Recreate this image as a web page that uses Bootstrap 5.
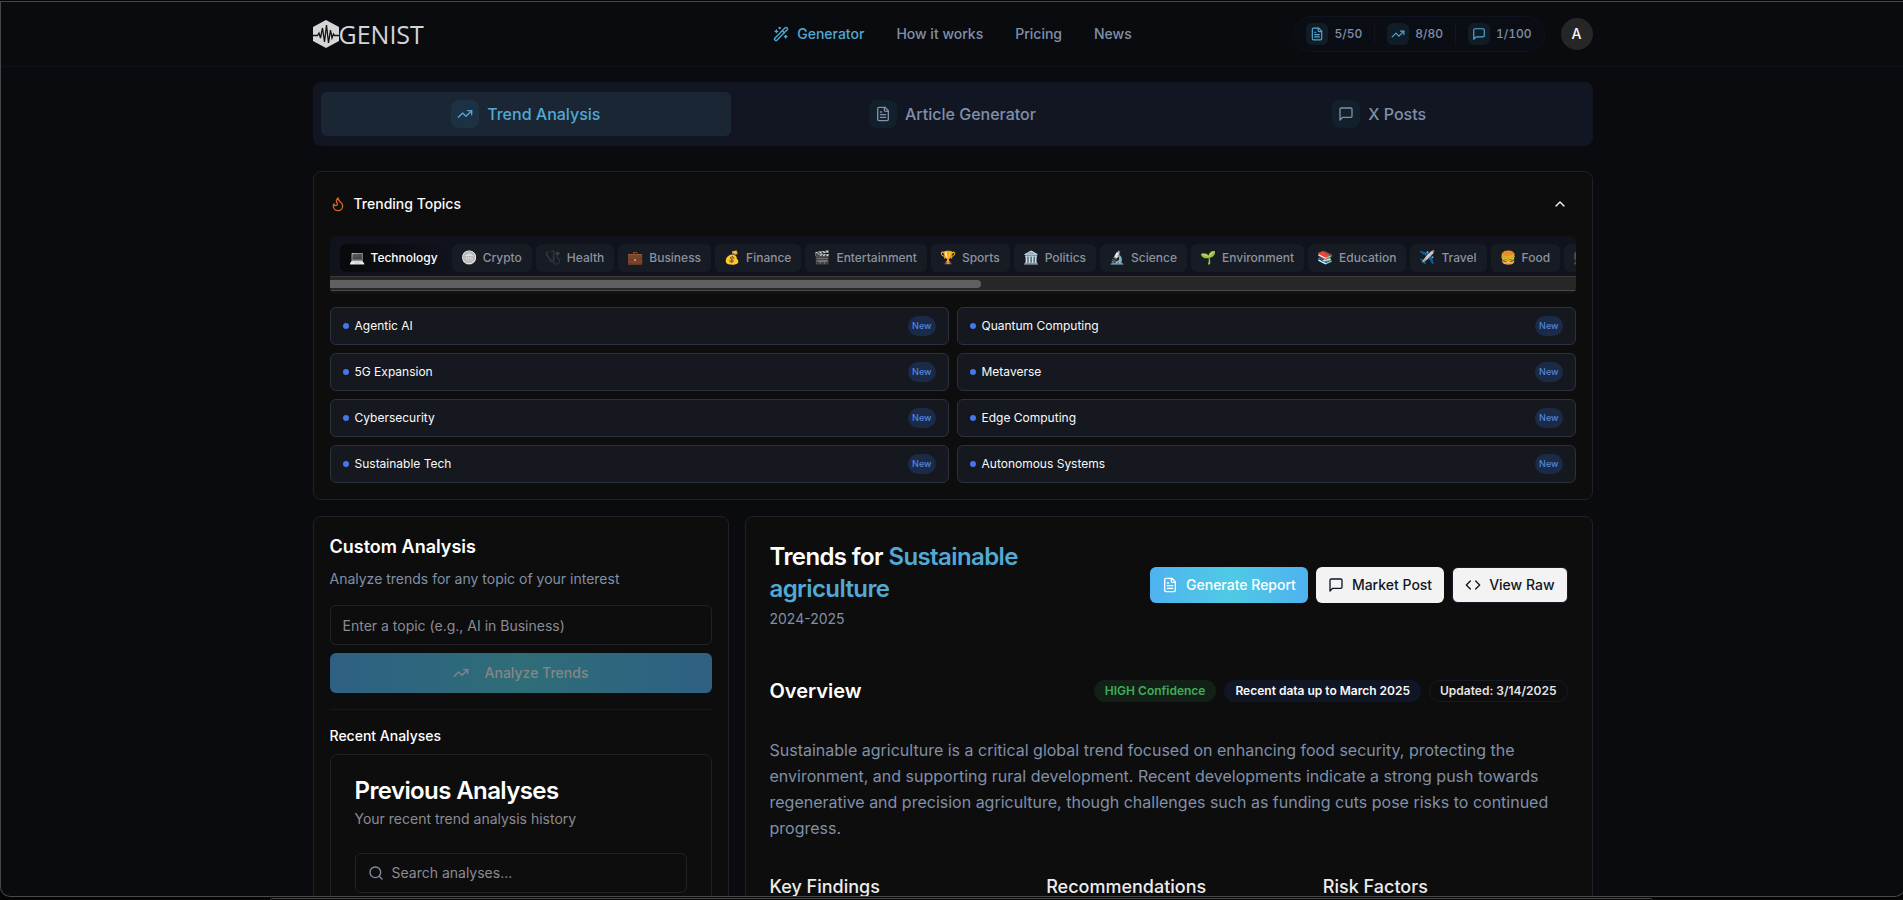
<!DOCTYPE html>
<html lang="en" data-bs-theme="dark">
<head>
<meta charset="utf-8">
<meta name="viewport" content="width=device-width, initial-scale=1">
<title>Genist – Trend Analysis</title>
<link href="https://cdn.jsdelivr.net/npm/bootstrap@5.3.0/dist/css/bootstrap.min.css" rel="stylesheet">
<style>
:root{--accent:#52a9d4;--muted:#8090a8;--gray:#8b8b93;--line:#212124;--panel:#0d0d0d}
body{font-family:Inter,"Noto Sans",sans-serif;font-size:14px;line-height:20px;background:#050505;color:#fafafa;height:100vh;overflow:hidden}
.ico{fill:none;stroke:currentColor;stroke-width:2;stroke-linecap:round;stroke-linejoin:round;flex:none}
.window{height:calc(100vh - 4px);margin-top:1px;margin-right:-2px;background:#0a0b0f;border:1px solid #45464a;border-bottom-color:#4a4a4c;border-radius:0 0 10px 10px;overflow:hidden}
.dock-edge{height:3px;margin:1px 250px 0 270px;border-top:1px solid #4c4a4a;border-radius:8px 8px 0 0}
.wrap{max-width:1280px;margin-inline:auto}
.site-head{height:65px;border-bottom:1px solid #0e101b}
.side{flex:1 1 0}
.top-nav{gap:32px}
.nav-link-top{color:var(--muted);font-weight:500;text-decoration:none}
.nav-link-top.active,.accent{color:var(--accent)}
.wordmark{font-family:"Open Sans",sans-serif;font-size:25px;line-height:28px;color:#d4d4d4}
.quota{height:36px;border:1px solid #10131f;border-radius:18px;background:#0b0d14;padding:0 12px;color:var(--muted);font-size:12px;font-weight:500;font-variant-numeric:tabular-nums}
.quota-item{gap:6px}
.quota-item + .quota-item{border-left:1px solid #12151f;padding-left:12px;margin-left:12px}
.tile{width:22px;height:22px;border-radius:6px;background:#111d26;color:var(--accent);display:flex;align-items:center;justify-content:center}
.tile-lg{width:28px;height:28px;border-radius:8px;background:#12202c;color:inherit}
.avatar{width:32px;height:32px;border:0;border-radius:50%;background:#262626;color:#fafafa;font-weight:500;padding:0}
.modes{margin-top:15px;padding:10px 8px;border-radius:8px;background:#111622;display:grid;grid-template-columns:repeat(3,1fr);gap:16px}
.mode{height:44px;border:0;border-radius:6px;background:none;color:var(--muted);font-size:16px;font-weight:500}
.mode.active{background:#1a2633;color:var(--accent)}
.mode.active .tile{background:#1c3144}
.panel{background:var(--panel);border:1px solid var(--line);border-radius:8px}
.trending{margin-top:25px;padding:16px}
.trend-title{height:32px;margin-bottom:16px;font-weight:500}
.flame{color:#d9622b}
.fold{border:0;background:none;color:#fafafa;padding:8px}
.chips{background:#10131c;border-radius:6px;overflow:hidden;padding-bottom:3px;margin-bottom:13px}
.chip-row{padding:8px 10px 4px;gap:4px;overflow:hidden}
.chip{height:28px;border:0;border-radius:6px;background:#171b24;color:#8d929d;font-size:12px;font-weight:500;padding:0 10px;gap:6px;white-space:nowrap;flex:none}
.chip.active{background:linear-gradient(90deg,#08090b,#10131c);color:#fff}
.emoji{font-size:13px;line-height:16px;width:15px;display:inline-flex;justify-content:center;font-family:"Noto Color Emoji",sans-serif}
.emoji-silver{filter:grayscale(1)}
.emoji-dim{filter:grayscale(.8) brightness(.4)}
.track{height:15px;background:#272727;border-top:1px solid #3a3a3a;border-bottom:1px solid #4a4a4a;padding:3px 0}
.thumb{height:8px;border-radius:0 4px 4px 0;background:#606060}
.topics{display:grid;grid-template-columns:1fr 1fr;gap:8px}
.topic{height:38px;border:1px solid #2b313d;border-radius:6px;background:#15181f;padding:0 12px;gap:6px;color:#fafafa;font-size:12px}
.dot{width:6px;height:6px;border-radius:50%;background:#4278ee}
.tag-new{height:20px;border-radius:10px;padding:0 4px;background:#1b2a47;color:#5487dc;font-size:9px;line-height:20px;font-weight:500}
.main-grid{display:grid;grid-template-columns:416px minmax(0,1fr);gap:16px;margin-top:16px}
.custom{padding:16px}
h1,h2,h3,h4,p{margin:0}
.h-panel{font-size:18px;line-height:28px;font-weight:600}
.h-section{font-size:20px;line-height:28px;font-weight:600}
.h-minor{font-size:14px;line-height:20px;font-weight:500}
.h-big{font-size:24px;line-height:32px;font-weight:600;letter-spacing:-.025em}
.history .h-big + p{margin-top:2px}
.report .h-big + p{margin-top:4px}
.txt-muted{color:var(--muted)}
.txt-gray{color:var(--gray)}
.rule{border-color:#16181f;opacity:1}
.field{height:40px;background:var(--panel);border:1px solid #232326;border-radius:6px;padding:0 12px;color:#fafafa;font-size:14px;width:100%}
.field::placeholder{color:var(--gray);opacity:1}
.analyze{height:40px;margin-top:8px;border:0;border-radius:6px;background:linear-gradient(90deg,#2e6083,#2f6d78,#2e6083);color:#868686;font-weight:500;width:100%}
.history{margin-top:8px;padding:20px 24px 24px}
.finder{gap:8px}
.finder input{background:none;border:0;outline:0;color:#fafafa;padding:0;width:100%}
.finder input::placeholder{color:var(--gray);opacity:1}
.report{padding:24px}
.report-title{max-width:300px}
.act{height:36px;border:0;border-radius:6px;padding:0 12px;gap:8px;font-weight:500;background:#f3f3f3;color:#111624;white-space:nowrap}
.act-main{background:linear-gradient(90deg,#4eb2f0,#4fcae4,#4eb2f0);color:#fff}
.act-raw{border:1px solid #151a2c}
.pill{height:22px;border:1px solid transparent;border-radius:11px;padding:0 10px;font-size:12px;line-height:20px;font-weight:600}
.pill-ok{background:#132017;color:#3fae57}
.pill-data{background:#111626;color:#fafafa}
.pill-date{border-color:#151a28;color:#e3e3e6}
.overview-text{font-size:16px;line-height:26px;margin-top:32px}
.cols3{display:grid;grid-template-columns:repeat(3,1fr);gap:32px;margin-top:32px}
.cols3 h3{font-size:18px;line-height:28px;font-weight:500;color:#ececec}
</style>
</head>
<body>
<svg class="d-none" xmlns="http://www.w3.org/2000/svg">
  <symbol id="i-trend" viewBox="0 0 24 24"><path d="M22 7 13.500 15.500 8.500 10.500 2 17"/><path d="M16 7h6v6"/></symbol>
  <symbol id="i-file" viewBox="0 0 24 24"><path d="M15 2H6a2 2 0 0 0-2 2v16a2 2 0 0 0 2 2h12a2 2 0 0 0 2-2V7Z"/><path d="M14 2v4a2 2 0 0 0 2 2h4"/><path d="M10 9H8"/><path d="M16 13H8"/><path d="M16 17H8"/></symbol>
  <symbol id="i-msg" viewBox="0 0 24 24"><path d="M21 15a2 2 0 0 1-2 2H7l-4 4V5a2 2 0 0 1 2-2h14a2 2 0 0 1 2 2z"/></symbol>
  <symbol id="i-wand" viewBox="0 0 24 24"><path d="m21.640 3.640-1.280-1.280a1.210 1.210 0 0 0-1.720 0L2.360 18.640a1.210 1.210 0 0 0 0 1.720l1.280 1.280a1.200 1.200 0 0 0 1.720 0L21.640 5.360a1.200 1.200 0 0 0 0-1.720"/><path d="m14 7 3 3"/><path d="M5 6v4"/><path d="M19 14v4"/><path d="M10 2v2"/><path d="M7 8H3"/><path d="M21 16h-4"/><path d="M11 3H9"/></symbol>
</svg>
<div class="window">
  <header class="site-head">
    <div class="wrap d-flex align-items-center h-100">
      <div class="side">
        <a href="#" class="d-inline-flex align-items-center text-decoration-none pt-1" aria-label="Genist home">
          <svg width="26" height="28" viewBox="0 0 26 28"><path d="M13 0 26 7v14l-13 7L0 21V7Z" fill="#d6d6d6"/><path d="M0 15.500h4.500l1.500-2.500 1.500 5 2-10 2 14L13.500 5l2 18 2-13 1.500 8 1.500-4 1 1.500H26" fill="none" stroke="#111" stroke-width="1.300"/></svg>
          <span class="wordmark">GENIST</span>
        </a>
      </div>
      <nav class="top-nav d-flex">
        <a href="#" class="nav-link-top active d-flex align-items-center gap-2"><svg class="ico" width="16" height="16"><use href="#i-wand"/></svg>Generator</a>
        <a href="#" class="nav-link-top">How it works</a>
        <a href="#" class="nav-link-top">Pricing</a>
        <a href="#" class="nav-link-top">News</a>
      </nav>
      <div class="side d-flex justify-content-end align-items-center gap-3">
        <div class="quota d-flex align-items-center">
          <div class="quota-item d-flex align-items-center"><span class="tile"><svg class="ico" width="14" height="14"><use href="#i-file"/></svg></span>5/50</div>
          <div class="quota-item d-flex align-items-center"><span class="tile"><svg class="ico" width="14" height="14"><use href="#i-trend"/></svg></span>8/80</div>
          <div class="quota-item d-flex align-items-center"><span class="tile"><svg class="ico" width="14" height="14"><use href="#i-msg"/></svg></span>1/100</div>
        </div>
        <button class="avatar" type="button">A</button>
      </div>
    </div>
  </header>
  <main class="wrap">
    <div class="modes">
      <button class="mode active d-flex align-items-center justify-content-center gap-2" type="button"><span class="tile tile-lg"><svg class="ico" width="16" height="16"><use href="#i-trend"/></svg></span>Trend Analysis</button>
      <button class="mode d-flex align-items-center justify-content-center gap-2" type="button"><span class="tile tile-lg"><svg class="ico" width="16" height="16"><use href="#i-file"/></svg></span>Article Generator</button>
      <button class="mode d-flex align-items-center justify-content-center gap-2" type="button"><span class="tile tile-lg"><svg class="ico" width="16" height="16"><use href="#i-msg"/></svg></span>X Posts</button>
    </div>

    <section class="panel trending">
      <div class="trend-title d-flex align-items-center gap-2">
        <svg class="ico flame" width="16" height="16" viewBox="0 0 24 24"><path d="M8.500 14.500A2.500 2.500 0 0 0 11 12c0-1.380-.5-2-1-3-1.072-2.143-.224-4.054 2-6 .5 2.500 2 4.900 4 6.500 2 1.600 3 3.500 3 5.500a7 7 0 1 1-14 0c0-1.153.433-2.294 1-3a2.500 2.500 0 0 0 2.500 2.500z"/></svg>
        Trending Topics
        <button type="button" class="fold ms-auto d-flex" aria-label="Collapse"><svg class="ico" width="16" height="16" viewBox="0 0 24 24"><path d="m18 15-6-6-6 6"/></svg></button>
      </div>
      <div class="chips">
        <div class="chip-row d-flex">
          <button type="button" class="chip active d-flex align-items-center"><span class="emoji emoji-silver">💻</span>Technology</button>
          <button type="button" class="chip d-flex align-items-center"><span class="emoji emoji-silver">🪙</span>Crypto</button>
          <button type="button" class="chip d-flex align-items-center"><span class="emoji emoji-dim">🩺</span>Health</button>
          <button type="button" class="chip d-flex align-items-center"><span class="emoji">💼</span>Business</button>
          <button type="button" class="chip d-flex align-items-center"><span class="emoji">💰</span>Finance</button>
          <button type="button" class="chip d-flex align-items-center"><span class="emoji">🎬</span>Entertainment</button>
          <button type="button" class="chip d-flex align-items-center"><span class="emoji">🏆</span>Sports</button>
          <button type="button" class="chip d-flex align-items-center"><span class="emoji">🏛️</span>Politics</button>
          <button type="button" class="chip d-flex align-items-center"><span class="emoji">🔬</span>Science</button>
          <button type="button" class="chip d-flex align-items-center"><span class="emoji">🌱</span>Environment</button>
          <button type="button" class="chip d-flex align-items-center"><span class="emoji">📚</span>Education</button>
          <button type="button" class="chip d-flex align-items-center"><span class="emoji">✈️</span>Travel</button>
          <button type="button" class="chip d-flex align-items-center"><span class="emoji">🍔</span>Food</button>
          <button type="button" class="chip d-flex align-items-center" aria-label="Home"><span class="emoji emoji-dim">🏡</span></button>
        </div>
        <div class="track"><div class="thumb" style="width:52.300%"></div></div>
      </div>
      <div class="topics">
        <button type="button" class="topic d-flex align-items-center"><span class="dot"></span>Agentic AI<span class="tag-new ms-auto">New</span></button>
        <button type="button" class="topic d-flex align-items-center"><span class="dot"></span>Quantum Computing<span class="tag-new ms-auto">New</span></button>
        <button type="button" class="topic d-flex align-items-center"><span class="dot"></span>5G Expansion<span class="tag-new ms-auto">New</span></button>
        <button type="button" class="topic d-flex align-items-center"><span class="dot"></span>Metaverse<span class="tag-new ms-auto">New</span></button>
        <button type="button" class="topic d-flex align-items-center"><span class="dot"></span>Cybersecurity<span class="tag-new ms-auto">New</span></button>
        <button type="button" class="topic d-flex align-items-center"><span class="dot"></span>Edge Computing<span class="tag-new ms-auto">New</span></button>
        <button type="button" class="topic d-flex align-items-center"><span class="dot"></span>Sustainable Tech<span class="tag-new ms-auto">New</span></button>
        <button type="button" class="topic d-flex align-items-center"><span class="dot"></span>Autonomous Systems<span class="tag-new ms-auto">New</span></button>
      </div>
    </section>

    <div class="main-grid">
      <section class="panel custom">
        <h2 class="h-panel">Custom Analysis</h2>
        <label for="topic" class="txt-muted d-block mt-2 mb-3">Analyze trends for any topic of your interest</label>
        <input id="topic" class="field" type="text" placeholder="Enter a topic (e.g., AI in Business)">
        <button type="button" disabled class="analyze d-flex align-items-center justify-content-center gap-3"><svg class="ico" width="16" height="16"><use href="#i-trend"/></svg>Analyze Trends</button>
        <hr class="rule my-3">
        <h3 class="h-minor">Recent Analyses</h3>
        <div class="panel history">
          <h2 class="h-big">Previous Analyses</h2>
          <p class="txt-gray">Your recent trend analysis history</p>
          <div class="field finder d-flex align-items-center mt-4">
            <svg class="ico txt-muted" width="16" height="16" viewBox="0 0 24 24"><circle cx="11" cy="11" r="8"/><path d="m21 21-4.300-4.300"/></svg>
            <input type="search" placeholder="Search analyses..." aria-label="Search analyses">
          </div>
        </div>
      </section>

      <section class="panel report">
        <div class="d-flex align-items-center justify-content-between">
          <div class="report-title">
            <h1 class="h-big">Trends for <span class="accent">Sustainable agriculture</span></h1>
            <p class="txt-muted">2024-2025</p>
          </div>
          <div class="d-flex gap-2">
            <button type="button" class="act act-main d-flex align-items-center"><svg class="ico" width="16" height="16"><use href="#i-file"/></svg>Generate Report</button>
            <button type="button" class="act d-flex align-items-center"><svg class="ico" width="16" height="16"><use href="#i-msg"/></svg>Market Post</button>
            <button type="button" class="act act-raw d-flex align-items-center"><svg class="ico" width="16" height="16" viewBox="0 0 24 24"><path d="m16 18 6-6-6-6"/><path d="m8 6-6 6 6 6"/></svg>View Raw</button>
          </div>
        </div>
        <div class="d-flex align-items-center gap-2 mt-5">
          <h2 class="h-section me-auto">Overview</h2>
          <span class="pill pill-ok">HIGH Confidence</span>
          <span class="pill pill-data">Recent data up to March 2025</span>
          <span class="pill pill-date">Updated: 3/14/2025</span>
        </div>
        <p class="overview-text txt-muted">Sustainable agriculture is a critical global trend focused on enhancing food security, protecting the environment, and supporting rural development. Recent developments indicate a strong push towards regenerative and precision agriculture, though challenges such as funding cuts pose risks to continued progress.</p>
        <div class="cols3">
          <h3>Key Findings</h3>
          <h3>Recommendations</h3>
          <h3>Risk Factors</h3>
        </div>
      </section>
    </div>
  </main>
</div>
<div class="dock-edge"></div>
<script src="https://cdn.jsdelivr.net/npm/bootstrap@5.3.0/dist/js/bootstrap.bundle.min.js"></script>
</body>
</html>
